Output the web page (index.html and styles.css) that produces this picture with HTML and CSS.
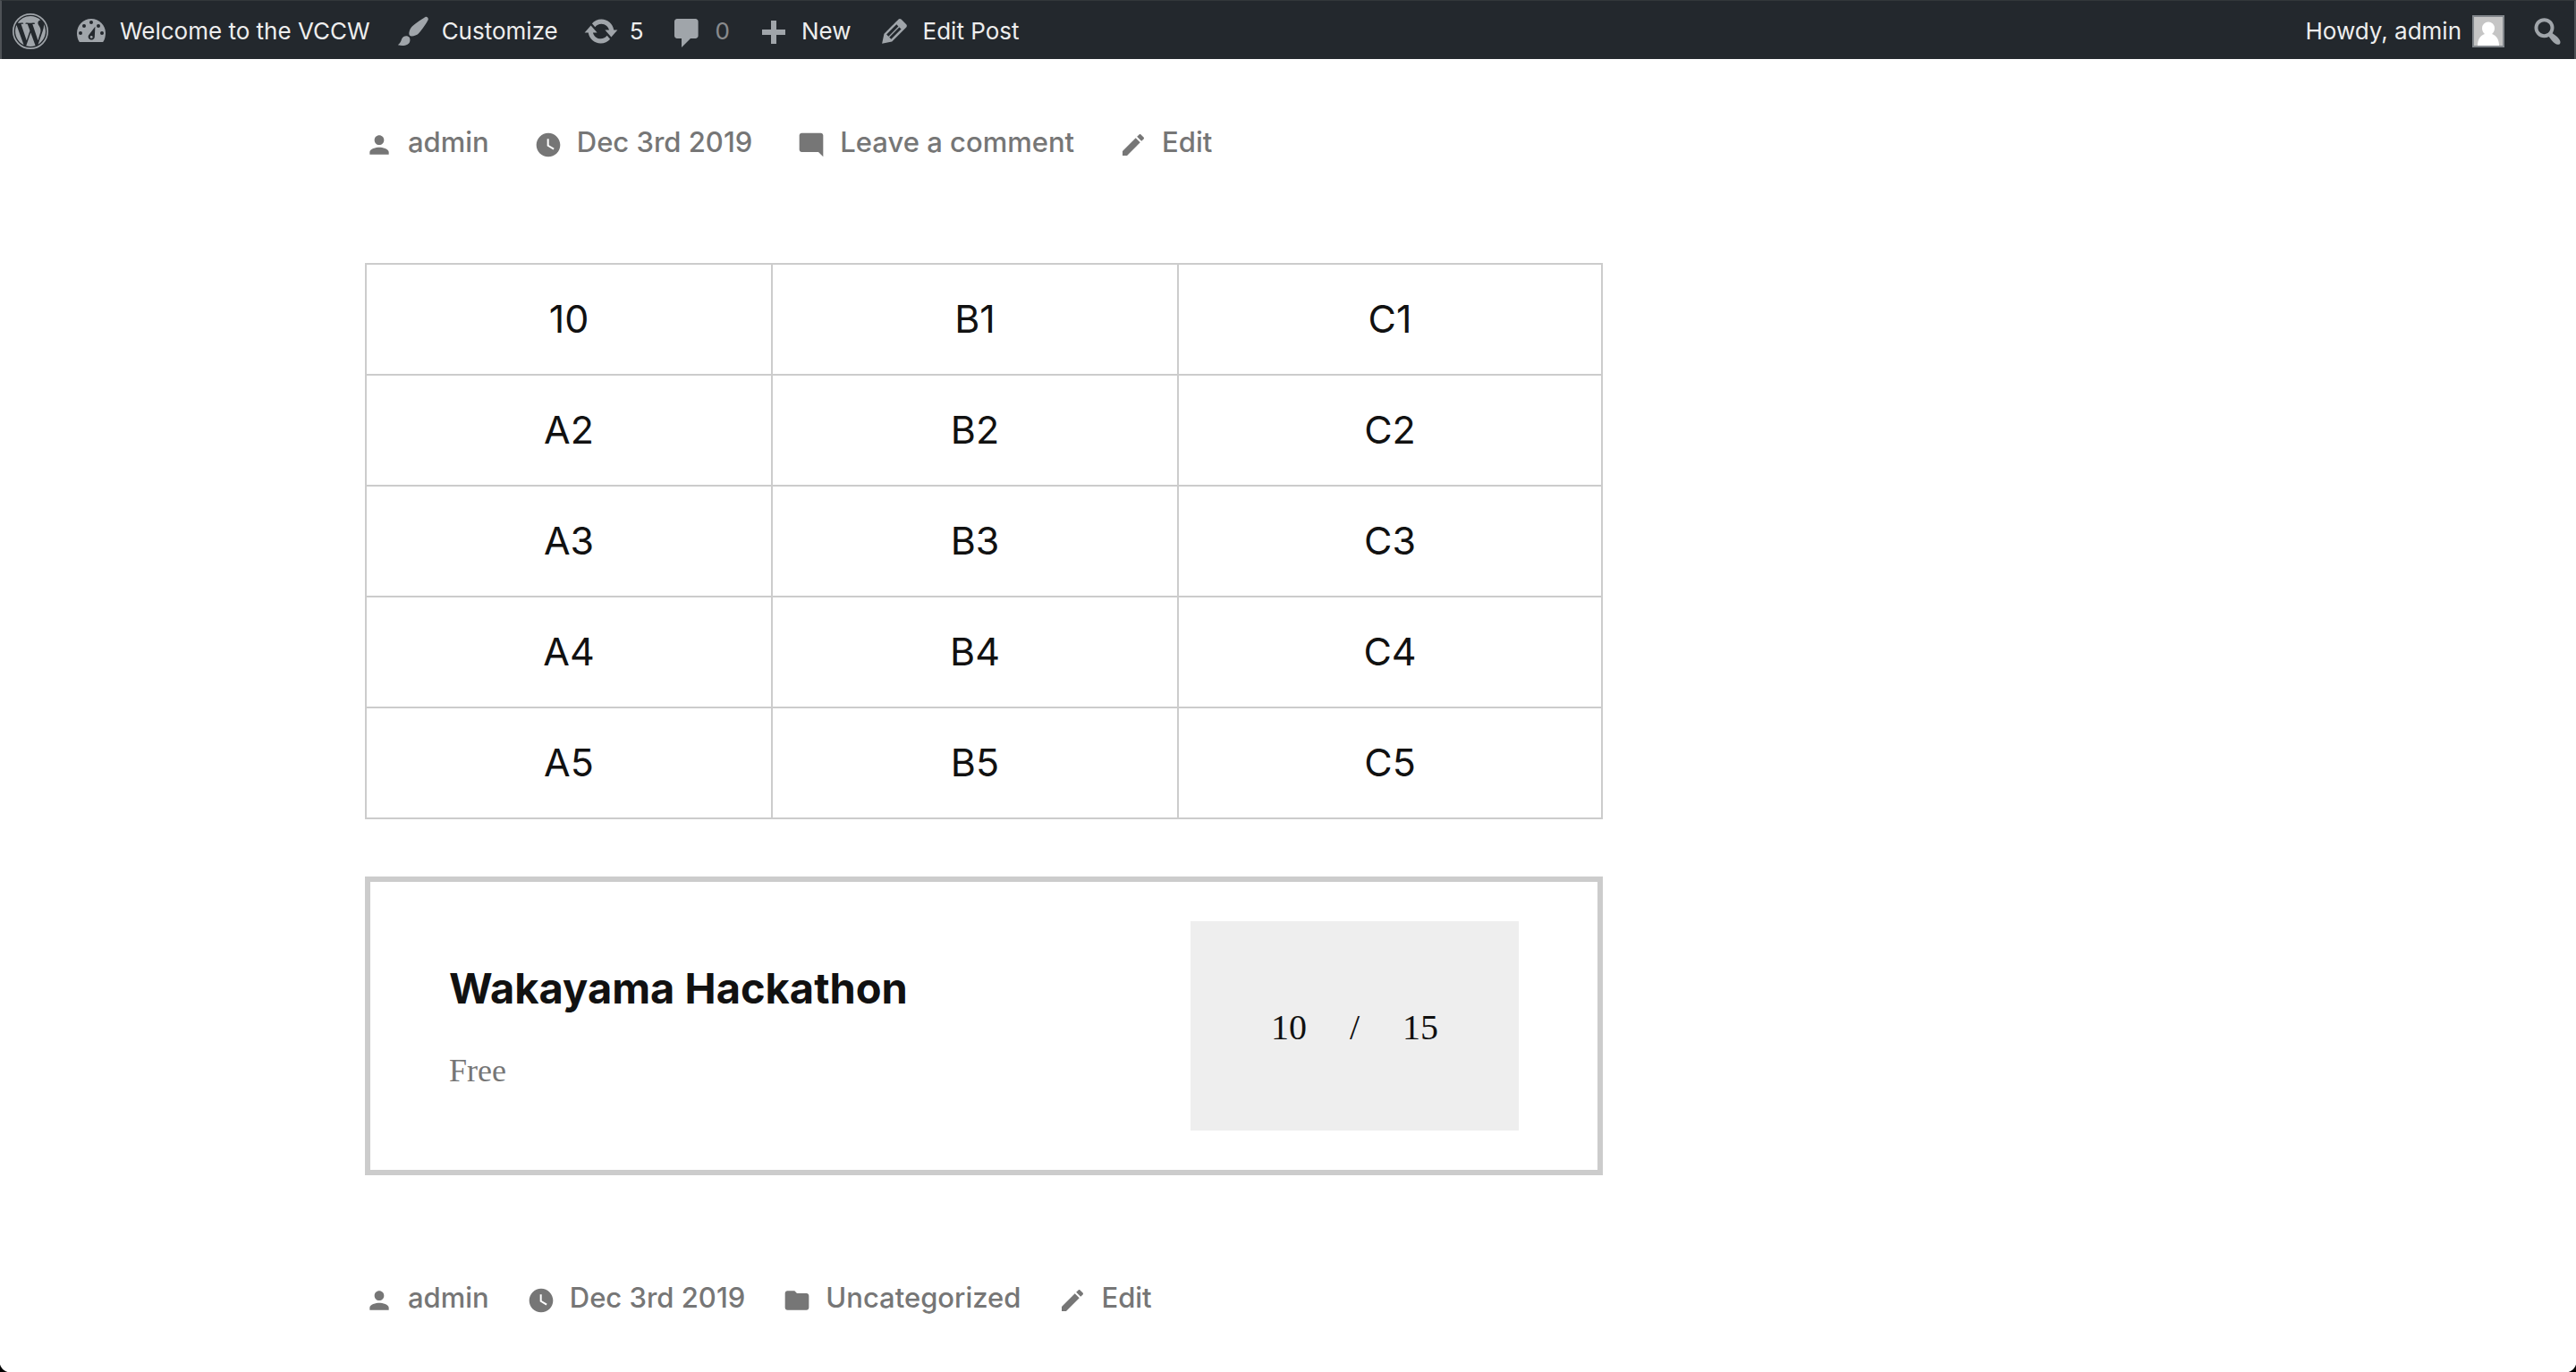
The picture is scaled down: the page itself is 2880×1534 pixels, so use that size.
FILE: index.html
```
<!DOCTYPE html>
<html lang="en">
<head>
<meta charset="utf-8">
<meta name="viewport" content="width=device-width, initial-scale=1">
<title>Welcome to the VCCW</title>
<link rel="stylesheet" href="styles.css">
</head>
<body>
<svg class="sprite" aria-hidden="true">
  <symbol id="person" viewBox="0 0 24 24"><path d="M12 12c2.21 0 4-1.79 4-4s-1.79-4-4-4-4 1.79-4 4 1.79 4 4 4zm0 2c-2.67 0-8 1.34-8 4v2h16v-2c0-2.66-5.33-4-8-4z"/></symbol>
  <symbol id="watch" viewBox="0 0 24 24"><path d="M12 2C6.5 2 2 6.5 2 12s4.5 10 10 10 10-4.5 10-10S17.5 2 12 2zm4.2 14.2L11 13V7h1.5v5.2l4.5 2.7-.8 1.3z"/></symbol>
  <symbol id="comment" viewBox="0 0 24 24"><path d="M21.99 4c0-1.1-.89-2-1.99-2H4c-1.1 0-2 .9-2 2v12c0 1.1.9 2 2 2h14l4 4-.01-18z"/></symbol>
  <symbol id="edit" viewBox="0 0 24 24"><path d="M3 17.25V21h3.75L17.81 9.94l-3.75-3.75L3 17.25zM20.71 7.04c.39-.39.39-1.02 0-1.41l-2.34-2.34c-.39-.39-1.02-.39-1.41 0l-1.83 1.83 3.75 3.75 1.83-1.83z"/></symbol>
  <symbol id="archive" viewBox="0 0 24 24"><path d="M10 4H4c-1.1 0-1.99.9-1.99 2L2 18c0 1.1.9 2 2 2h16c1.1 0 2-.9 2-2V8c0-1.1-.9-2-2-2h-8l-2-2z"/></symbol>
</svg>

<header class="adminbar">
  <nav class="bar-group" aria-label="Toolbar">
    <a class="bar-item" href="#" aria-label="About WordPress">
      <svg class="bar-icon" viewBox="0 0 24 24"><circle cx="12" cy="12" r="11.5" fill="none" stroke="currentColor"/><g transform="translate(.7 .7) scale(.942)"><path d="M21.469 6.825c.84 1.537 1.318 3.3 1.318 5.175 0 3.979-2.156 7.456-5.363 9.325l3.295-9.527c.615-1.54.82-2.771.82-3.864 0-.405-.026-.78-.07-1.11m-7.981.105c.647-.03 1.232-.105 1.232-.105.582-.075.514-.93-.067-.899 0 0-1.755.135-2.88.135-1.064 0-2.85-.15-2.85-.15-.585-.03-.661.855-.075.885 0 0 .54.061 1.125.09l1.68 4.605-2.37 7.08L5.354 6.9c.649-.03 1.234-.1 1.234-.1.585-.075.516-.93-.065-.896 0 0-1.746.138-2.874.138-.2 0-.438-.008-.69-.015C4.911 3.15 8.235 1.215 12 1.215c2.809 0 5.365 1.072 7.286 2.833-.046-.003-.091-.009-.141-.009-1.06 0-1.812.923-1.812 1.914 0 .89.513 1.643 1.06 2.531.411.72.89 1.643.89 2.977 0 .915-.354 1.994-.821 3.479l-1.075 3.585-3.9-11.61zM12 22.784c-1.059 0-2.081-.153-3.048-.437l3.237-9.406 3.315 9.087c.024.053.05.101.078.149-1.12.393-2.325.607-3.582.607M1.211 12c0-1.564.336-3.05.935-4.39L7.29 21.709C3.694 19.96 1.212 16.271 1.211 12"/></g></svg>
    </a>
    <a class="bar-item" href="#">
      <svg class="bar-icon" viewBox="0 0 20 20"><path d="M3.4 16h13.2c1-1.5 1.4-3.3 1.4-5 0-4.42-3.58-8-8-8s-8 3.58-8 8c0 1.7.4 3.5 1.4 5z"/><g class="cut"><circle cx="10" cy="5" r="1"/><circle cx="6" cy="7" r="1"/><circle cx="14" cy="7" r="1"/><circle cx="4" cy="11" r="1"/><circle cx="16" cy="11" r="1"/><path d="M12.2 7.4 8.5 12.2a1.8 1.8 0 1 0 3.4 1z"/></g><circle cx="10.1" cy="13.2" r=".7"/></svg>
      <span>Welcome to the VCCW</span>
    </a>
    <a class="bar-item" href="#">
      <svg class="bar-icon" viewBox="0 0 20 20"><path d="M18.33 3.57s.27-.8-.31-1.36c-.53-.52-1.22-.24-1.22-.24-.61.3-5.76 3.47-7.67 5.57-.86.96-2.06 3.79-1.09 4.82.92.98 3.96-.17 4.79-1 2.06-2.06 5.21-7.17 5.5-7.79zM1.4 17.65c2.37-1.56 1.46-3.41 3.23-4.64.93-.65 2.22-.62 3.08.29.63.67.8 2.57-.16 3.46-1.57 1.45-4 1.55-6.15.89z"/></svg>
      <span>Customize</span>
    </a>
    <a class="bar-item" href="#">
      <svg class="bar-icon" viewBox="0 0 20 20"><path d="M10.2 3.28c3.53 0 6.43 2.61 6.92 6h2.08l-3.5 4-3.5-4h2.32c-.45-1.97-2.21-3.45-4.32-3.45-1.45 0-2.73.71-3.54 1.78L4.95 5.66C6.23 4.2 8.11 3.28 10.2 3.28zm-.4 13.44c-3.52 0-6.43-2.61-6.92-6H.8l3.5-4c1.17 1.33 2.33 2.67 3.5 4H5.48c.45 1.97 2.21 3.45 4.32 3.45 1.45 0 2.73-.71 3.54-1.78l1.71 1.95c-1.28 1.46-3.15 2.38-5.25 2.38z"/></svg>
      <span>5</span>
    </a>
    <a class="bar-item" href="#">
      <svg class="bar-icon" viewBox="0 0 20 20"><path d="M4.5 3h10.3c.8 0 1.5.7 1.5 1.5v8c0 .8-.7 1.5-1.5 1.5H12l-5 5v-5H4.5C3.7 14 3 13.3 3 12.5v-8C3 3.7 3.7 3 4.5 3z"/></svg>
      <span class="faded">0</span>
    </a>
    <a class="bar-item" href="#">
      <svg class="bar-icon" viewBox="0 0 20 20"><path d="M17 9v3h-5v5H9v-5H4V9h5V4h3v5z"/></svg>
      <span>New</span>
    </a>
    <a class="bar-item" href="#">
      <svg class="bar-icon" viewBox="0 0 20 20"><path d="M13.89 3.39l2.71 2.72c.46.46.42 1.24.03 1.64l-8.01 8.02-5.56 1.16 1.16-5.58s7.6-7.63 7.99-8.03c.39-.39 1.22-.39 1.68.07zm-2.73 2.79l-5.59 5.61 1.11 1.11 5.54-5.65zm-2.97 8.23l5.58-5.6-1.07-1.08-5.59 5.6z"/></svg>
      <span>Edit Post</span>
    </a>
  </nav>
  <div class="bar-group">
    <a class="bar-item" href="#">
      <span>Howdy, admin</span>
      <svg class="avatar" viewBox="0 0 32 32"><path fill="#c5c5c5" d="M0 0h32v32H0z"/><path fill="#fff" d="M16 5.500a7 7 0 0 1 7 7c0 2.600-1.200 5-3 6.500 5 1.600 8 6 8 13H4c0-7 3-11.400 8-13-1.800-1.500-3-3.900-3-6.500a7 7 0 0 1 7-7z"/></svg>
    </a>
    <a class="bar-item" href="#" aria-label="Search">
      <svg class="bar-icon" viewBox="0 0 20 20"><path d="M12.14 4.18c1.87 1.87 2.11 4.75.72 6.89.12.1.22.21.36.31.2.16.47.36.81.59.34.24.56.39.66.47.42.31.73.57.94.78.32.32.6.65.84 1 .25.35.44.69.59 1.04.14.35.21.68.18 1-.02.32-.14.59-.36.81s-.49.34-.81.36c-.31.02-.65-.04-.99-.19-.35-.14-.7-.34-1.04-.59-.35-.24-.68-.52-1-.84-.21-.21-.47-.52-.77-.93-.1-.13-.25-.35-.47-.66-.22-.32-.4-.57-.56-.78-.16-.2-.29-.35-.44-.5-2.07 1.09-4.69.76-6.44-.98-2.14-2.15-2.14-5.64 0-7.78 2.15-2.15 5.63-2.15 7.78 0zm-1.41 6.36c1.36-1.37 1.36-3.58 0-4.95-1.37-1.37-3.59-1.37-4.95 0-1.37 1.37-1.37 3.58 0 4.95 1.36 1.37 3.58 1.37 4.95 0z"/></svg>
    </a>
  </div>
</header>

<main class="entry">
  <div class="meta">
    <a href="#"><svg><use href="#person"/></svg>admin</a>
    <a href="#"><svg><use href="#watch"/></svg><time datetime="2019-12-03">Dec 3rd 2019</time></a>
    <a href="#"><svg><use href="#comment"/></svg>Leave a comment</a>
    <a href="#"><svg><use href="#edit"/></svg>Edit</a>
  </div>

  <table class="grid">
    <colgroup><col class="col"><col class="col"><col></colgroup>
    <tbody>
      <tr><td>10</td><td>B1</td><td>C1</td></tr>
      <tr><td>A2</td><td>B2</td><td>C2</td></tr>
      <tr><td>A3</td><td>B3</td><td>C3</td></tr>
      <tr><td>A4</td><td>B4</td><td>C4</td></tr>
      <tr><td>A5</td><td>B5</td><td>C5</td></tr>
    </tbody>
  </table>

  <section class="event">
    <div class="event-info">
      <h2>Wakayama Hackathon</h2>
      <p>Free</p>
    </div>
    <div class="event-count"><span>10</span><span>/</span><span>15</span></div>
  </section>

  <footer class="meta meta-footer">
    <a href="#"><svg><use href="#person"/></svg>admin</a>
    <a href="#"><svg><use href="#watch"/></svg><time datetime="2019-12-03">Dec 3rd 2019</time></a>
    <a href="#"><svg><use href="#archive"/></svg>Uncategorized</a>
    <a href="#"><svg><use href="#edit"/></svg>Edit</a>
  </footer>
</main>
</body>
</html>
```
FILE: styles.css
```
* { box-sizing: border-box; }

body {
  margin: 0;
  background: #fff;
  color: #111;
  font-family: Inter, "Liberation Sans", sans-serif;
}

/* Rounded lower corners of the window */
body::before,
body::after {
  content: "";
  position: fixed;
  bottom: 0;
  width: 12px;
  height: 12px;
}
body::before { left: 0; background: radial-gradient(circle at 100% 0, transparent 12px, #000 13px); }
body::after { right: 0; background: radial-gradient(circle at 0 0, transparent 12px, #000 13px); }

a { color: inherit; text-decoration: none; }
svg { display: block; flex: none; fill: currentColor; }
.sprite { display: none; }

/* Admin toolbar */
.adminbar {
  display: flex;
  justify-content: space-between;
  align-items: center;
  height: 66px;
  padding: 2px 10px 0 12px;
  background: #23282d;
  border: 2px solid #4e5256;
  border-top: 1px solid #32373a;
  border-bottom: 0;
  color: #eee;
  font-size: 26px;
  line-height: 32px;
}
.bar-group { display: flex; align-items: center; gap: 28px; }
.bar-item { display: flex; align-items: center; gap: 12px; }
.bar-icon { width: 40px; height: 40px; color: #a0a5aa; }
.cut { fill: #23282d; }
.faded { opacity: .5; }
.avatar { width: 36px; height: 36px; border: 2px solid #82878c; }

/* Post */
.entry {
  width: calc(50% - 56px);
  margin-left: calc(10% + 120px);
  padding-top: 74px;
}
.meta {
  display: flex;
  gap: 50px;
  color: #767676;
  font-size: 31px;
  font-weight: 500;
  line-height: 38px;
  white-space: nowrap;
}
.meta a { display: flex; gap: 16px; }
.meta svg { width: 32px; height: 32px; margin-top: 6px; }
.meta-footer { gap: 42px; margin-top: 118px; }

.grid {
  width: 100%;
  margin-top: 116px;
  border-collapse: collapse;
  table-layout: fixed;
  font-size: 43px;
  line-height: 58px;
  text-align: center;
}
.grid .col { width: 454px; }
.grid td { padding: 31px 16px 33px; border: 2px solid #ccc; }

.event {
  display: flex;
  align-items: center;
  justify-content: space-between;
  margin-top: 64px;
  padding: 44px 88px;
  border: 6px solid #ccc;
}
.event-info h2 { margin: 0; font-size: 47px; line-height: 60px; font-weight: 700; }
.event-info p {
  margin: 40px 0 0;
  color: #767676;
  font: 36px/44px "Liberation Serif", serif;
}
.event-count {
  display: flex;
  gap: 48px;
  padding: 96px 90px 92px;
  background: #eee;
  font: 40px/46px "Liberation Serif", serif;
}
```
